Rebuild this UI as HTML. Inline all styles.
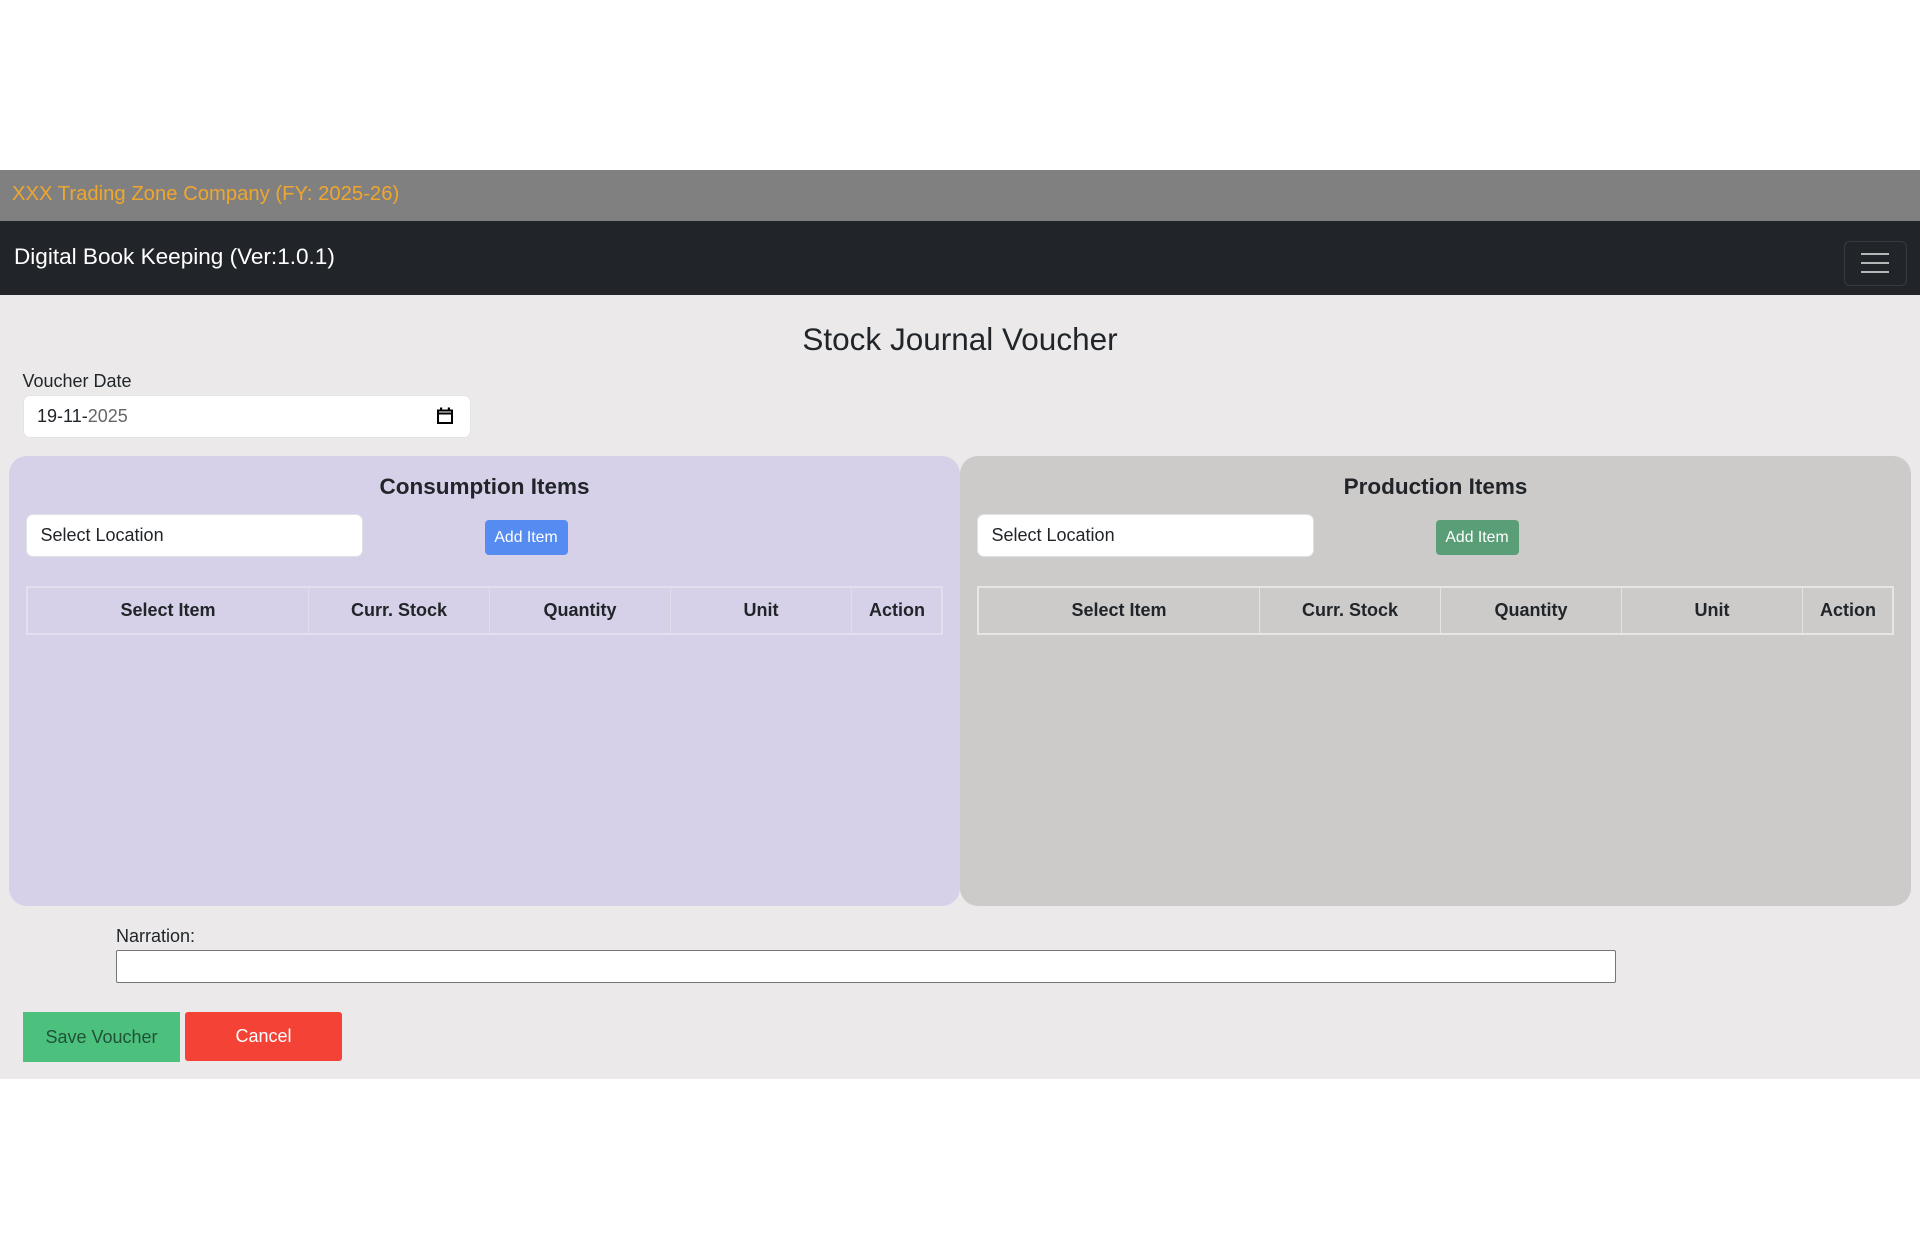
<!DOCTYPE html>
<html><head><meta charset="utf-8"><title>Stock Journal Voucher</title>
<style>
html,body{margin:0;padding:0;background:#fff}
body{width:1920px;height:1242px;position:relative;overflow:hidden;font-family:"Liberation Sans",Arial,sans-serif;color:#212529}
.a{position:absolute;box-sizing:border-box}
.t{position:absolute;white-space:nowrap;line-height:1}
.c{transform:translateX(-50%)}
.sel{background:#fff;border:1px solid #dee2e6;border-radius:7px;height:43px;top:514px}
.btn{border-radius:4px;top:520px;height:35px;width:83px;color:#fff;font-size:15.800px;line-height:35px;text-align:center;text-indent:-1px}
.tb{top:586px;height:49px;border:2px solid #e2dfee}
.tb.g{border-color:#e6e6e5}
.v{position:absolute;top:0;bottom:0;width:1px;background:#e0ddec}
.g .v{background:#e4e4e3}
.h{position:absolute;top:12px;font-size:18px;font-weight:bold;line-height:20px;white-space:nowrap;transform:translateX(-50%)}
</style></head><body>
<div class="a" style="left:0;top:170px;width:1920px;height:51px;background:#808080"></div>
<div class="t" style="left:12px;top:184px;font-size:20.250px;color:#eea62f">XXX Trading Zone Company (FY: 2025-26)</div>
<div class="a" style="left:0;top:221px;width:1920px;height:74px;background:#212529"></div>
<div class="t" style="left:14px;top:246px;font-size:22.550px;color:#fff">Digital Book Keeping (Ver:1.0.1)</div>
<div class="a" style="left:1844px;top:241px;width:63px;height:45px;border:1px solid #373b3f;border-radius:6px"></div>
<div class="a" style="left:1861px;top:253px;width:28px;height:2px;background:#b4b6b8"></div>
<div class="a" style="left:1861px;top:262px;width:28px;height:2px;background:#b4b6b8"></div>
<div class="a" style="left:1861px;top:271px;width:28px;height:2px;background:#b4b6b8"></div>

<div class="a" style="left:0;top:295px;width:1920px;height:784px;background:#ebe9ea"></div>
<div class="t c" style="left:960px;top:324px;font-size:31.500px">Stock Journal Voucher</div>
<div class="t" style="left:22.500px;top:372px;font-size:18px">Voucher Date</div>
<div class="a" style="left:23px;top:395px;width:448px;height:43px;background:#fff;border:1px solid #e4e4e6;border-radius:7px"></div>
<div class="t" style="left:37px;top:406.500px;font-size:18px">19-11-<span style="color:#666">2025</span></div>
<svg class="a" style="left:436px;top:405px" width="18" height="21" viewBox="0 0 18 21"><path d="M2 5.500h14v12.500h-14zM2 8.500h14" fill="none" stroke="#000" stroke-width="2"/><path d="M4 2.500h2.200v3h-2.200zM11.800 2.500h2.200v3h-2.200z" fill="#000"/></svg>

<div class="a" style="left:9px;top:456px;width:951px;height:450px;background:#d6d1e8;border-radius:18px"></div>
<div class="a" style="left:960px;top:456px;width:951px;height:450px;background:#cccbc9;border-radius:18px"></div>
<div class="t c" style="left:484.500px;top:475.500px;font-size:22.500px;font-weight:bold">Consumption Items</div>
<div class="t c" style="left:1435.500px;top:475.500px;font-size:22.500px;font-weight:bold">Production Items</div>

<div class="a sel" style="left:26px;width:337px"></div>
<div class="t" style="left:40.500px;top:526px;font-size:18px">Select Location</div>
<div class="a btn" style="left:485px;background:#568cf2">Add Item</div>
<div class="a sel" style="left:977px;width:337px"></div>
<div class="t" style="left:991.500px;top:526px;font-size:18px">Select Location</div>
<div class="a btn" style="left:1436px;background:#5a9e78">Add Item</div>

<div class="a tb" style="left:26px;width:917px">
<div class="v" style="left:280px"></div><div class="v" style="left:461px"></div><div class="v" style="left:642px"></div><div class="v" style="left:823px"></div>
<div class="h" style="left:140px">Select Item</div><div class="h" style="left:371px">Curr. Stock</div><div class="h" style="left:552px">Quantity</div><div class="h" style="left:733px">Unit</div><div class="h" style="left:869px">Action</div>
</div>
<div class="a tb g" style="left:977px;width:917px">
<div class="v" style="left:280px"></div><div class="v" style="left:461px"></div><div class="v" style="left:642px"></div><div class="v" style="left:823px"></div>
<div class="h" style="left:140px">Select Item</div><div class="h" style="left:371px">Curr. Stock</div><div class="h" style="left:552px">Quantity</div><div class="h" style="left:733px">Unit</div><div class="h" style="left:869px">Action</div>
</div>

<div class="t" style="left:116px;top:927px;font-size:18px">Narration:</div>
<div class="a" style="left:116px;top:950px;width:1500px;height:33px;background:#fff;border:1px solid #767676;border-radius:2px"></div>
<div class="a" style="left:23px;top:1012px;width:157px;height:50px;background:#4cc17d;color:#1f5236;font-size:18px;line-height:50px;text-align:center">Save Voucher</div>
<div class="a" style="left:185px;top:1012px;width:157px;height:49px;background:#f44336;color:#fff;font-size:18px;line-height:49px;text-align:center;border-radius:3px">Cancel</div>
</body></html>
